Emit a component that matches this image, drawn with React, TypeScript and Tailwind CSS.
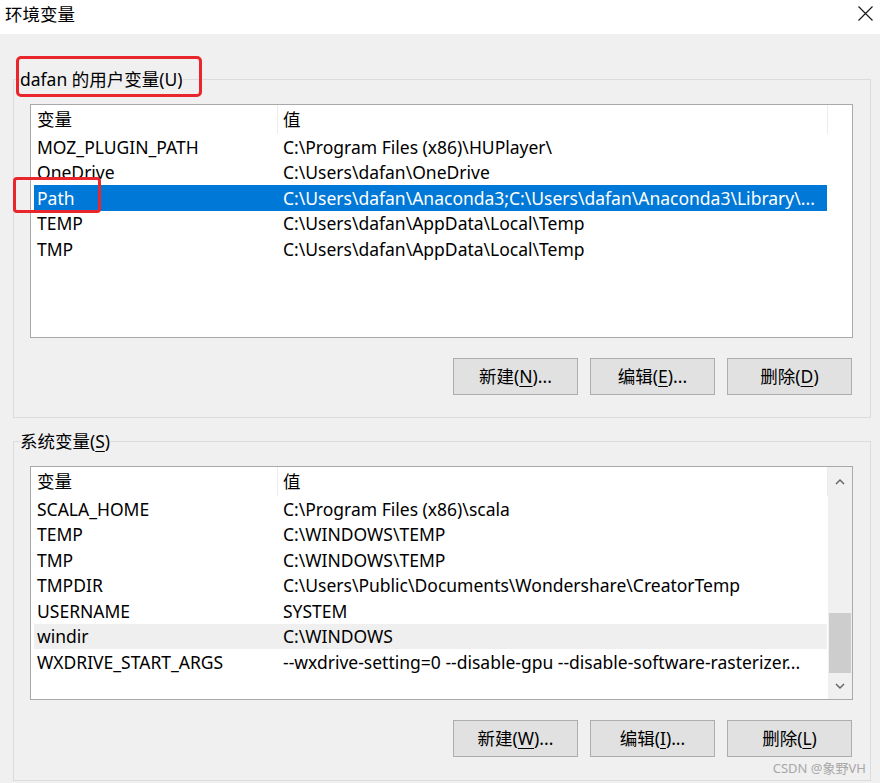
import React from 'react';

interface Row {
  name: string;
  value: string;
  selected?: boolean;
  hover?: boolean;
}

const userVars: Row[] = [
  { name: 'MOZ_PLUGIN_PATH', value: 'C:\\Program Files (x86)\\HUPlayer\\' },
  { name: 'OneDrive', value: 'C:\\Users\\dafan\\OneDrive' },
  { name: 'Path', value: 'C:\\Users\\dafan\\Anaconda3;C:\\Users\\dafan\\Anaconda3\\Library\\...', selected: true },
  { name: 'TEMP', value: 'C:\\Users\\dafan\\AppData\\Local\\Temp' },
  { name: 'TMP', value: 'C:\\Users\\dafan\\AppData\\Local\\Temp' },
];

const sysVars: Row[] = [
  { name: 'SCALA_HOME', value: 'C:\\Program Files (x86)\\scala' },
  { name: 'TEMP', value: 'C:\\WINDOWS\\TEMP' },
  { name: 'TMP', value: 'C:\\WINDOWS\\TEMP' },
  { name: 'TMPDIR', value: 'C:\\Users\\Public\\Documents\\Wondershare\\CreatorTemp' },
  { name: 'USERNAME', value: 'SYSTEM' },
  { name: 'windir', value: 'C:\\WINDOWS', hover: true },
  { name: 'WXDRIVE_START_ARGS', value: '--wxdrive-setting=0 --disable-gpu --disable-software-rasterizer...' },
];

const Chevron = ({ down }: { down?: boolean }) => (
  <svg width="10" height="6" viewBox="0 0 10 6" className="text-[#606060]">
    <path
      d={down ? 'M1 1 L5 5 L9 1' : 'M1 5 L5 1 L9 5'}
      fill="none"
      stroke="currentColor"
      strokeWidth="1.4"
    />
  </svg>
);

const VarList = ({ rows, scroll }: { rows: Row[]; scroll?: boolean }) => (
  <div className="ml-[16px] flex h-[234px] w-[823px] border border-[#a9a9a9] bg-white">
    <div className="w-[797px] overflow-hidden">
      <div className="flex h-[29px] items-center">
        <div className="w-[246px] pl-[6px]">变量</div>
        <div className="h-full w-px bg-[#ececec]" />
        <div className="w-[549px] pl-[5px]">值</div>
        <div className="h-full w-px bg-[#ececec]" />
      </div>
      {rows.map((r) => (
        <div
          key={r.name}
          className={`ml-[3px] flex h-[25.5px] w-[793px] items-center whitespace-nowrap ${
            r.selected ? 'bg-[#0078d7] text-white' : r.hover ? 'bg-[#efefef]' : ''
          }`}
        >
          <div className="w-[243px] pl-[3px]">{r.name}</div>
          <div className="w-[550px] overflow-hidden pl-[6px]">{r.value}</div>
        </div>
      ))}
    </div>
    {scroll && (
      <div className="flex flex-1 flex-col bg-[#f0f0f0]">
        <div className="flex h-[30px] items-center justify-center">
          <Chevron />
        </div>
        <div className="h-[116px]" />
        <div className="mx-px h-[60px] bg-[#cdcdcd]" />
        <div className="flex flex-1 items-center justify-center">
          <Chevron down />
        </div>
      </div>
    )}
  </div>
);

const Btn = ({ pre, key_, post }: { pre: string; key_: string; post: string }) => (
  <button className="flex h-[37px] w-[125px] items-center justify-center border border-[#adadad] bg-[#e1e1e1]">
    {pre}(<span className="underline underline-offset-[3px]">{key_}</span>){post}
  </button>
);

const Group = ({
  label,
  height,
  children,
}: {
  label: React.ReactNode;
  height: string;
  children: React.ReactNode;
}) => (
  <div className={`relative w-[858px] border border-[#dcdcdc] pt-[24px] ${height}`}>
    <div className="absolute left-[6px] top-[-13px] bg-[#f0f0f0] leading-[24px]">{label}</div>
    {children}
  </div>
);

export default function App() {
  return (
    <div className="relative h-[783px] w-[880px] overflow-hidden bg-[#f0f0f0] font-['Noto_Sans','Noto_Sans_CJK_SC',sans-serif] text-[17.5px] text-black">
      <div className="flex h-[34px] items-start justify-between bg-white pl-[5px] pr-[7px]">
        <span className="mt-[2px] leading-[24px]">环境变量</span>
        <svg width="15" height="15" viewBox="0 0 15 15" className="mt-[6px]">
          <path d="M0.5 0.5 L14.5 14.5 M14.5 0.5 L0.5 14.5" stroke="#1a1a1a" strokeWidth="1.2" />
        </svg>
      </div>

      <div className="pl-[13px] pt-[45px]">
        <Group label="dafan 的用户变量(U)" height="h-[339px]">
          <VarList rows={userVars} />
          <div className="mt-[20px] flex justify-end gap-[12px] pr-[18px]">
            <Btn pre="新建" key_="N" post="..." />
            <Btn pre="编辑" key_="E" post="..." />
            <Btn pre="删除" key_="D" post="" />
          </div>
        </Group>

        <div className="h-[23px]" />

        <Group
          label={
            <span>
              系统变量(<span className="underline underline-offset-[3px]">S</span>)
            </span>
          }
          height="h-[340px]"
        >
          <VarList rows={sysVars} scroll />
          <div className="mt-[20px] flex justify-end gap-[12px] pr-[18px]">
            <Btn pre="新建" key_="W" post="..." />
            <Btn pre="编辑" key_="I" post="..." />
            <Btn pre="删除" key_="L" post="" />
          </div>
        </Group>
      </div>

      {/* red annotation boxes */}
      <div className="absolute left-[16px] top-[56px] h-[41px] w-[186px] rounded-[5px] border-[3px] border-[#e8262b]" />
      <div className="absolute left-[13px] top-[177px] h-[36px] w-[88px] rounded-[4px] border-[3px] border-[#e8262b]" />

      <div className="absolute right-[14px] top-[759px] text-[13px] leading-[18px] text-[#a8a8a8]">
        CSDN @象野VH
      </div>
    </div>
  );
}
